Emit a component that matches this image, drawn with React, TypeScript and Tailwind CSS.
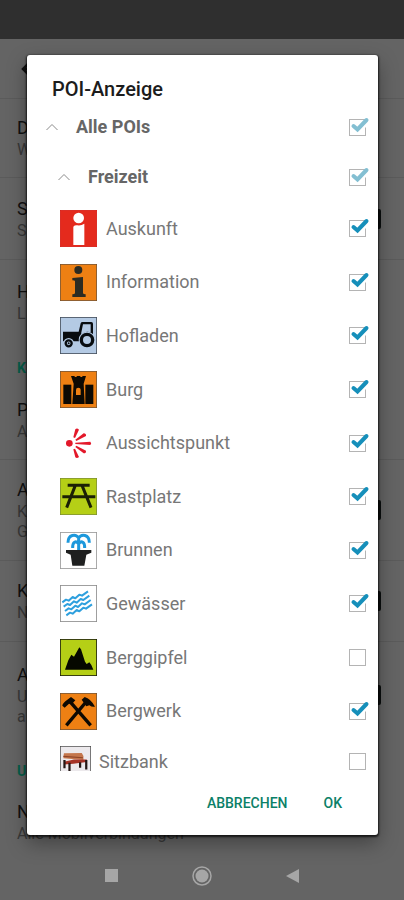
import { useState, type ReactNode } from "react";

type IconName =
  | "auskunft" | "information" | "hofladen" | "burg" | "aussicht" | "rastplatz"
  | "brunnen" | "gewaesser" | "gipfel" | "bergwerk" | "sitzbank";

const tiles: Record<IconName, { fill: string; border: string; art: ReactNode }> = {
  auskunft: {
    fill: "#e42a1d",
    border: "#d8221a",
    art: (
      <g fill="#fff">
        <circle cx="56" cy="24" r="16" />
        <path d="M40 50Q44 45 52 46Q63 48 73 41V105H40Z" />
      </g>
    ),
  },
  information: {
    fill: "#ee8013",
    border: "#7d5228",
    art: (
      <g fill="#2c2b22">
        <circle cx="55" cy="18" r="12" />
        <path d="M37 42L69 39V87Q69 91 77 91V99H37V91Q45 91 45 87V52Q45 49 37 49Z" />
      </g>
    ),
  },
  hofladen: {
    fill: "#b4cae4",
    border: "#44505e",
    art: (
      <g>
        <path d="M9 44H56L62 19Q63 15 68 15H94Q99 15 99 20V62L60 73H9Z" fill="#080c10" />
        <path d="M69 22H92V46Q80 42 70 48L63 51Z" fill="#b4cae4" />
        <circle cx="81" cy="69" r="25" fill="#b4cae4" />
        <circle cx="81" cy="69" r="17" fill="#b4cae4" stroke="#080c10" strokeWidth="10" />
        <circle cx="26" cy="79" r="16" fill="#b4cae4" />
        <circle cx="26" cy="79" r="9" fill="#b4cae4" stroke="#080c10" strokeWidth="7" />
        <circle cx="26" cy="79" r="3" fill="#080c10" />
      </g>
    ),
  },
  burg: {
    fill: "#ee8013",
    border: "#7d5228",
    art: (
      <g fill="#0d0903">
        <path d="M10 41H34V99H10Z" />
        <path d="M76 41H100V99H76Z" />
        <path d="M33 15H44V18H50V15H61V18H67V15H78L71 38L74 99H37L41 38Z" />
        <path d="M48 72V56Q48 50 55 50Q62 50 62 56V72Z" fill="#ee8013" />
      </g>
    ),
  },
  aussicht: {
    fill: "#fff",
    border: "#fff",
    art: (
      <g fill="#e3182a">
        <circle cx="28" cy="55" r="10" />
        <path d="M40 37L46 13Q51 8 57 14L45 39Z" />
        <path d="M46 44L71 25Q79 25 78 33L49 48Z" />
        <path d="M46 53L91 50Q96 55 91 60L46 57Z" />
        <path d="M49 62L78 77Q79 85 71 85L46 66Z" />
        <path d="M45 71L57 96Q51 102 46 97L40 73Z" />
      </g>
    ),
  },
  rastplatz: {
    fill: "#b5cf16",
    border: "#7f9325",
    art: (
      <path d="M23 22H89M7 56H106M46 22L20 89M66 22L93 89" stroke="#1b2005" strokeWidth="9" />
    ),
  },
  brunnen: {
    fill: "#fff",
    border: "#9a9a9a",
    art: (
      <g>
        <path
          d="M56 54V18M56 18C48 5 24 6 24 32M56 18C64 5 88 6 88 32M56 36C48 24 37 30 38 48M56 36C64 24 75 30 74 48"
          fill="none"
          stroke="#1c98dc"
          strokeWidth="9"
        />
        <path d="M18 54H94V62L79 68L73 101H37L32 68L18 62Z" fill="#1f2020" />
      </g>
    ),
  },
  gewaesser: {
    fill: "#fff",
    border: "#8c8c8c",
    art: (
      <g fill="none" stroke="#2ea0de" strokeWidth="6">
        {[0, 1, 2, 3].map((n) => (
          <path
            key={n}
            transform={`translate(${n * 4} ${n * 13})`}
            d="M7 52L18 44L26 47L38 36L46 40L58 29L66 32L84 19"
            strokeLinejoin="round"
          />
        ))}
      </g>
    ),
  },
  gipfel: {
    fill: "#b5cf16",
    border: "#1d2200",
    art: <path d="M15 92L25 64L34 47L42 53L58 25L63 31L75 68L80 75L88 70L94 78L100 92Z" fill="#060800" />,
  },
  bergwerk: {
    fill: "#ee8013",
    border: "#7d5228",
    art: (
      <g fill="none" stroke="#0d0903" strokeWidth="10">
        <path d="M19 97L78 27M92 97L32 28" />
        <path d="M7 38Q8 30 21 21L33 12L46 22L35 34L27 32L14 44Z" fill="#0d0903" stroke="none" />
        <path d="M65 20L74 12Q92 17 105 41Q96 43 88 37L79 40Z" fill="#0d0903" stroke="none" />
      </g>
    ),
  },
  sitzbank: {
    fill: "#ece9ec",
    border: "#444",
    art: (
      <g>
        <path d="M14 26L78 25L84 36V50L12 44Z" fill="#c4764c" />
        <path d="M12 37L82 42" stroke="#8e4327" strokeWidth="4" />
        <path d="M14 56L50 48L96 48V57L48 64L14 66Z" fill="#a53326" />
        <path d="M16 50V80M34 60V92M94 50V84M72 58V78" stroke="#241715" strokeWidth="8" />
      </g>
    ),
  },
};

function Tile({ name, small }: { name: IconName; small?: boolean }) {
  const t = tiles[name];
  return (
    <svg viewBox="0 0 111 111" aria-hidden="true" className={small ? "size-[31px] shrink-0" : "size-[37px] shrink-0"}>
      <rect x="1" y="1" width="109" height="109" fill={t.fill} stroke={t.border} strokeWidth="3" />
      {t.art}
    </svg>
  );
}

function Check({ id, initial, dim }: { id: string; initial: boolean; dim?: boolean }) {
  const [on, setOn] = useState(initial);
  return (
    <span className="relative size-[17px] shrink-0">
      <input
        id={id}
        type="checkbox"
        checked={on}
        onChange={() => setOn(!on)}
        className="block size-[17px] appearance-none border border-[#b4b4b4] bg-white"
      />
      {on && (
        <svg viewBox="0 0 22 22" aria-hidden="true" className="pointer-events-none absolute -top-1 left-0 size-[22px]">
          <path d="M13 7L20 2V9L16 13Z" fill="#fff" />
          <path
            d="M4.5 11L8.5 14.5L17.5 5"
            fill="none"
            stroke={dim ? "#83bfd2" : "#168fba"}
            strokeWidth="4"
            strokeLinecap="round"
          />
        </svg>
      )}
    </span>
  );
}

function Group({ id, label, nested }: { id: string; label: string; nested?: boolean }) {
  return (
    <div className={`flex h-[50px] shrink-0 items-center pr-3 ${nested ? "pl-[31px]" : "pl-[19px]"}`}>
      <button type="button" aria-label={`${label} einklappen`} className="mr-[18px]">
        <svg viewBox="0 0 12 8" className="h-2 w-3" fill="none" stroke="#8a8a8a" strokeWidth="1">
          <path d="M0.5 7L6 1.5L11.5 7" />
        </svg>
      </button>
      <label htmlFor={id} className="flex-1 text-lg font-bold text-[#666]">{label}</label>
      <Check id={id} initial dim />
    </div>
  );
}

const pois: { icon: IconName; label: string; on: boolean }[] = [
  { icon: "auskunft", label: "Auskunft", on: true },
  { icon: "information", label: "Information", on: true },
  { icon: "hofladen", label: "Hofladen", on: true },
  { icon: "burg", label: "Burg", on: true },
  { icon: "aussicht", label: "Aussichtspunkt", on: true },
  { icon: "rastplatz", label: "Rastplatz", on: true },
  { icon: "brunnen", label: "Brunnen", on: true },
  { icon: "gewaesser", label: "Gewässer", on: true },
  { icon: "gipfel", label: "Berggipfel", on: false },
  { icon: "bergwerk", label: "Bergwerk", on: true },
];

function Setting({ title, lines, box, toggle, last }: {
  title: string; lines: string[]; box: string; toggle?: boolean; last?: boolean;
}) {
  return (
    <div className={`flex shrink-0 items-center justify-between pr-[23px] pl-[17px] ${box} ${last ? "" : "border-b border-[#5b5b5b]"}`}>
      <div>
        <p className="text-lg leading-6 text-[#111]">{title}</p>
        {lines.map((l) => (
          <p key={l} className="text-base leading-5 text-[#383838]">{l}</p>
        ))}
      </div>
      {toggle && <span className="h-5 w-9 rounded-xs bg-[#0b0f0e]" />}
    </div>
  );
}

export default function App() {
  return (
    <div className="relative min-h-screen overflow-hidden bg-[#646464] font-[Roboto,sans-serif]">
      <div aria-hidden="true" className="flex h-screen flex-col">
        <div className="h-[39px] shrink-0 bg-[#2f2f2f]" />
        <div className="flex h-[60px] shrink-0 items-center border-b border-[#5b5b5b] pl-[21px]">
          <svg viewBox="0 0 16 16" className="size-4" fill="none" stroke="#111" strokeWidth="2.5">
            <path d="M8 2L2 8L8 14M2 8H16" />
          </svg>
        </div>
        <Setting title="D" lines={["W"]} box="h-[79px]" />
        <Setting title="S" lines={["S"]} box="h-[82px]" toggle />
        <Setting title="H" lines={["L"]} box="h-[84px]" last />
        <h2 className="h-9 shrink-0 pt-[14px] pl-[17px] text-sm font-bold text-[#075d49]">K</h2>
        <Setting title="P" lines={["A"]} box="h-20" />
        <Setting title="A" lines={["K", "G"]} box="h-[101px]" toggle />
        <Setting title="K" lines={["N"]} box="h-[81px]" toggle />
        <Setting title="A" lines={["U", "a"]} box="h-[105px]" toggle last />
        <h2 className="h-[50px] shrink-0 pt-[14px] pl-[17px] text-sm font-bold text-[#075d49]">U</h2>
        <Setting title="N" lines={["Alle Mobilverbindungen"]} box="h-[50px]" last />
        <div className="flex-1" />
      </div>

      <div className="absolute inset-0 flex flex-col pt-[55px]">
        <section
          role="dialog"
          aria-labelledby="dialog-title"
          className="mr-[26px] ml-[27px] flex min-h-0 flex-1 flex-col rounded-[3px] bg-white shadow-[0_1px_2px_1px_rgba(0,0,0,0.7),0_8px_20px_rgba(0,0,0,0.35)]"
        >
          <h1 id="dialog-title" className="h-[47px] shrink-0 pt-5 pl-[25px] text-xl leading-7 font-medium text-[#1c1c1c]">
            POI-Anzeige
          </h1>
          <div className="flex min-h-0 flex-1 flex-col overflow-hidden">
            <Group id="all" label="Alle POIs" />
            <Group id="freizeit" label="Freizeit" nested />
            {pois.map((p) => (
              <div key={p.icon} className="flex flex-1 items-center pr-3 pl-[33px]">
                <Tile name={p.icon} />
                <label htmlFor={p.icon} className="ml-[9px] flex-1 text-lg text-[#777]">{p.label}</label>
                <Check id={p.icon} initial={p.on} />
              </div>
            ))}
            <div className="flex h-[33px] shrink-0 items-start overflow-hidden pt-2 pr-3 pl-[33px]">
              <Tile name="sitzbank" small />
              <label htmlFor="sitzbank" className="mt-2 ml-2 flex-1 text-lg leading-4 text-[#777]">
                Sitzbank
              </label>
              <span className="pt-[7px]">
                <Check id="sitzbank" initial={false} />
              </span>
            </div>
          </div>
          <div className="flex h-16 shrink-0 items-center justify-end gap-9 pr-9 text-sm font-medium text-[#0b8068]">
            <button type="button">ABBRECHEN</button>
            <button type="button">OK</button>
          </div>
        </section>
        <nav className="flex h-[65px] shrink-0 items-center justify-center gap-[74px] pt-4">
          <button type="button" aria-label="Letzte Apps" className="size-[13px] bg-[#a6a6a6]" />
          <button type="button" aria-label="Startseite" className="size-5">
            <svg viewBox="0 0 20 20" className="size-5">
              <circle cx="10" cy="10" r="9" fill="none" stroke="#a6a6a6" strokeWidth="1.5" />
              <circle cx="10" cy="10" r="6.5" fill="#a6a6a6" />
            </svg>
          </button>
          <button type="button" aria-label="Zurück">
            <svg viewBox="0 0 13 14" className="h-[14px] w-[13px]"><path d="M0 7L13 0V14Z" fill="#a6a6a6" /></svg>
          </button>
        </nav>
      </div>
    </div>
  );
}
